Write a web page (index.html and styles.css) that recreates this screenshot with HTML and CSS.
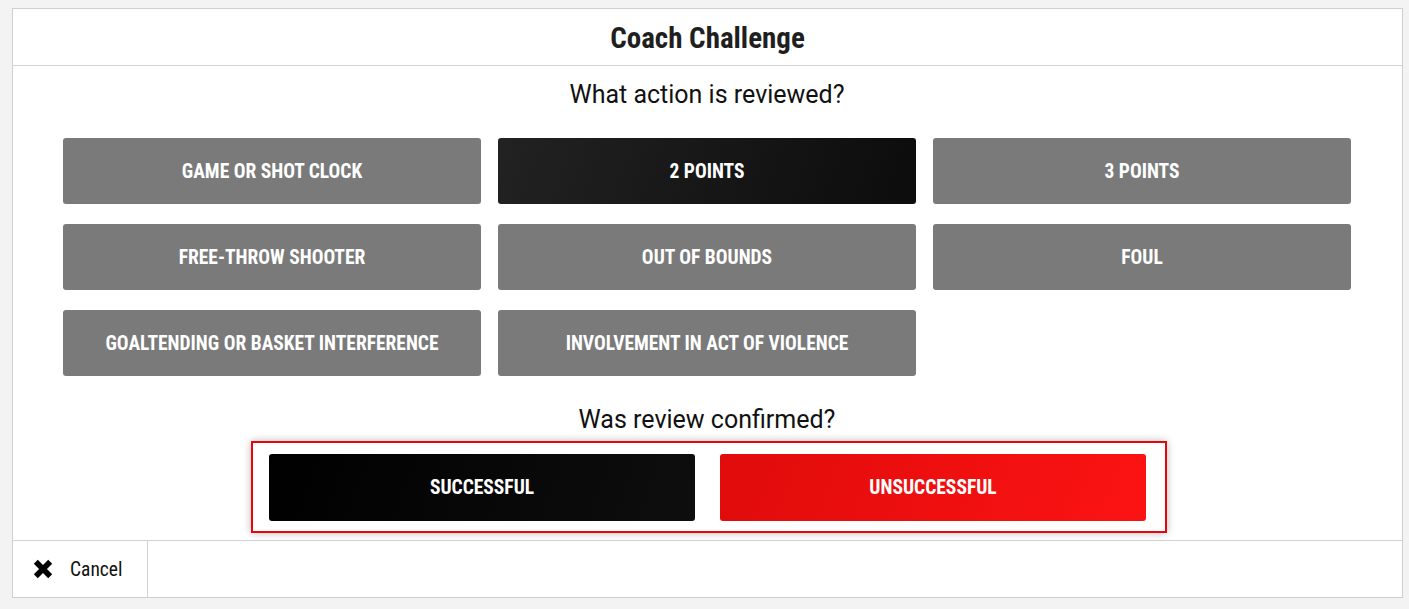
FILE: index.html
```html
<!DOCTYPE html>
<html>
<head>
<meta charset="utf-8">
<link rel="stylesheet" href="styles.css">
</head>
<body>
<div class="card">
  <div class="header"><span class="cond title">Coach Challenge</span></div>
  <div class="content">
    <div class="question">What action is reviewed?</div>
    <div class="grid">
      <button class="btn grey"><span class="cond">GAME OR SHOT CLOCK</span></button>
      <button class="btn dark"><span class="cond">2 POINTS</span></button>
      <button class="btn grey"><span class="cond">3 POINTS</span></button>
      <button class="btn grey"><span class="cond">FREE-THROW SHOOTER</span></button>
      <button class="btn grey"><span class="cond">OUT OF BOUNDS</span></button>
      <button class="btn grey"><span class="cond">FOUL</span></button>
      <button class="btn grey"><span class="cond">GOALTENDING OR BASKET INTERFERENCE</span></button>
      <button class="btn grey"><span class="cond">INVOLVEMENT IN ACT OF VIOLENCE</span></button>
    </div>
    <div class="question q2">Was review confirmed?</div>
    <div class="confirm">
      <button class="btn black"><span class="cond">SUCCESSFUL</span></button>
      <button class="btn red"><span class="cond">UNSUCCESSFUL</span></button>
    </div>
  </div>
  <div class="footer">
    <div class="cancel">
      <svg class="xicon" viewBox="0 0 20 20" width="20" height="20"><path d="M2.8 2.8 L17.2 17.2 M17.2 2.8 L2.8 17.2" stroke="#000" stroke-width="5.6" stroke-linecap="butt" fill="none"/></svg>
      <span class="cond cancel-text">Cancel</span>
    </div>
  </div>
</div>
</body>
</html>
```

FILE: styles.css
```css
html, body {
  margin: 0;
  padding: 0;
}
body {
  background: #f3f3f3;
  font-family: Roboto, "Liberation Sans", sans-serif;
  padding: 8px 6px 0 12px;
  height: 609px;
  box-sizing: border-box;
}
.cond {
  display: inline-block;
  font-family: "Roboto Condensed", Roboto, "Liberation Sans", sans-serif;
}
.card {
  background: #fff;
  border: 1px solid #cfcfcf;
  height: 590px;
  box-sizing: border-box;
  display: flex;
  flex-direction: column;
}
.header {
  height: 57px;
  border-bottom: 1px solid #d2d2d2;
  display: flex;
  align-items: center;
  justify-content: center;
  box-sizing: border-box;
}
.title {
  font-size: 29px;
  font-weight: 700;
  color: #1f1f1f;
  line-height: 1;
  padding-top: 2px;
}
.content {
  flex: 1;
  display: flex;
  flex-direction: column;
  align-items: center;
  padding: 14px 51px 0 50px;
}
.question {
  font-size: 25px;
  line-height: 30px;
  color: #111;
  text-align: center;
}
.q2 {
  margin-top: 29px;
}
.grid {
  margin-top: 28px;
  width: 100%;
  display: grid;
  grid-template-columns: repeat(3, 1fr);
  column-gap: 17px;
  row-gap: 20px;
}
.btn {
  border: none;
  border-radius: 3px;
  height: 66px;
  color: #fff;
  font-family: Roboto, sans-serif;
  font-size: 19.5px;
  font-weight: 700;
  padding: 0;
  cursor: pointer;
}
.grey { background: #7a7a7a; }
.dark { background: linear-gradient(110deg, #222 0%, #0c0c0c 100%); }
.black { background: linear-gradient(110deg, #000 0%, #0e0e0e 100%); }
.red { background: linear-gradient(110deg, #e00b0b 0%, #fc1313 100%); }
.confirm {
  margin-top: 6px;
  width: 916px;
  box-sizing: border-box;
  border: 2px solid #e5060d;
  box-shadow: 0 0 8px rgba(0, 0, 0, 0.28);
  padding: 11px 19px 10px 16px;
  display: grid;
  grid-template-columns: 426px 426px;
  column-gap: 25px;
  margin-left: 4px;
}
.confirm .btn { height: 67px; }
.footer {
  height: 57px;
  border-top: 1px solid #d2d2d2;
  box-sizing: border-box;
  display: flex;
}
.cancel {
  width: 135px;
  border-right: 1px solid #d2d2d2;
  display: flex;
  align-items: center;
  padding-left: 20px;
  box-sizing: border-box;
}
.xicon { display: block; }
.cancel-text {
  font-size: 19.5px;
  color: #111;
  margin-left: 17px;
}
```
